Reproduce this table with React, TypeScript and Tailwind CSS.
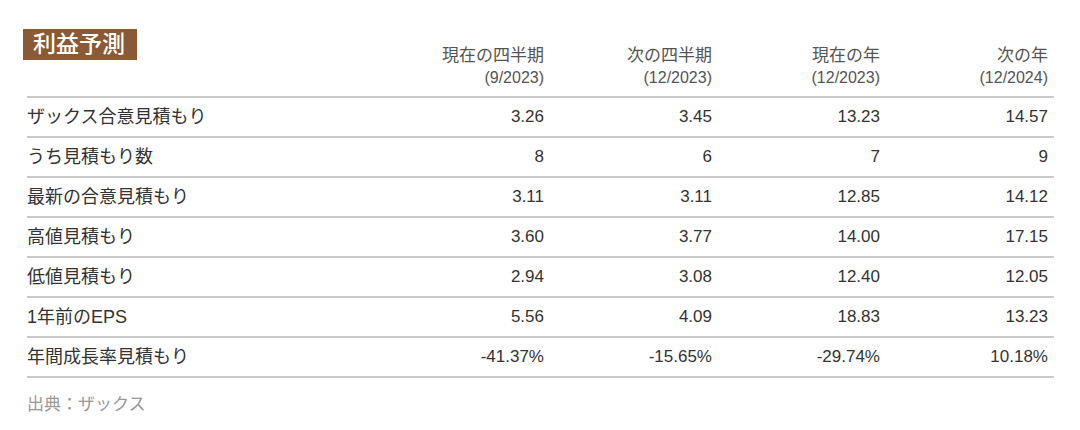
import React from 'react';

// --- DATA ---
const columns = [
    { title: '現在の四半期', period: '(9/2023)' },
    { title: '次の四半期', period: '(12/2023)' },
    { title: '現在の年', period: '(12/2023)' },
    { title: '次の年', period: '(12/2024)' },
];

const rows = [
    { label: 'ザックス合意見積もり', values: ['3.26', '3.45', '13.23', '14.57'] },
    { label: 'うち見積もり数', values: ['8', '6', '7', '9'] },
    { label: '最新の合意見積もり', values: ['3.11', '3.11', '12.85', '14.12'] },
    { label: '高値見積もり', values: ['3.60', '3.77', '14.00', '17.15'] },
    { label: '低値見積もり', values: ['2.94', '3.08', '12.40', '12.05'] },
    { label: '1年前のEPS', values: ['5.56', '4.09', '18.83', '13.23'] },
    { label: '年間成長率見積もり', values: ['-41.37%', '-15.65%', '-29.74%', '10.18%'] },
];

const gridCols = 'grid grid-cols-[350px_168px_168px_168px_168px]';

export default function App() {
    return (
        <div
            className="min-h-screen bg-white pl-[27px] pt-[29px]"
            style={{ fontFamily: '"Liberation Sans", "Noto Sans CJK JP", sans-serif' }}
        >
            <div className="w-[1027px]">
                {/* Header */}
                <div className={`${gridCols} h-[69px] border-b-2 border-[#cacaca]`}>
                    <div className="-ml-1">
                        <span className="inline-block h-[31px] bg-[#8a5a35] pl-[10px] pr-[12px] text-[23px] leading-[31px] font-medium text-white">
                            利益予測
                        </span>
                    </div>
                    {columns.map((col) => (
                        <div key={col.title + col.period} className="flex flex-col items-end justify-end pb-[7px] pr-[1px] leading-[22px] text-[#555]">
                            <span className="text-[17px]">{col.title}</span>
                            <span className="text-[16px]">{col.period}</span>
                        </div>
                    ))}
                </div>

                {/* Rows */}
                {rows.map((row) => (
                    <div key={row.label} className={`${gridCols} h-10 items-center border-b-2 border-[#cacaca] text-[#333]`}>
                        <div className="text-[18px]">{row.label}</div>
                        {row.values.map((v, i) => (
                            <div key={i} className="pr-[1px] text-right text-[17px]">{v}</div>
                        ))}
                    </div>
                ))}

                <div className="mt-[14px] text-[17px] text-[#999]">出典：ザックス</div>
            </div>
        </div>
    );
}
